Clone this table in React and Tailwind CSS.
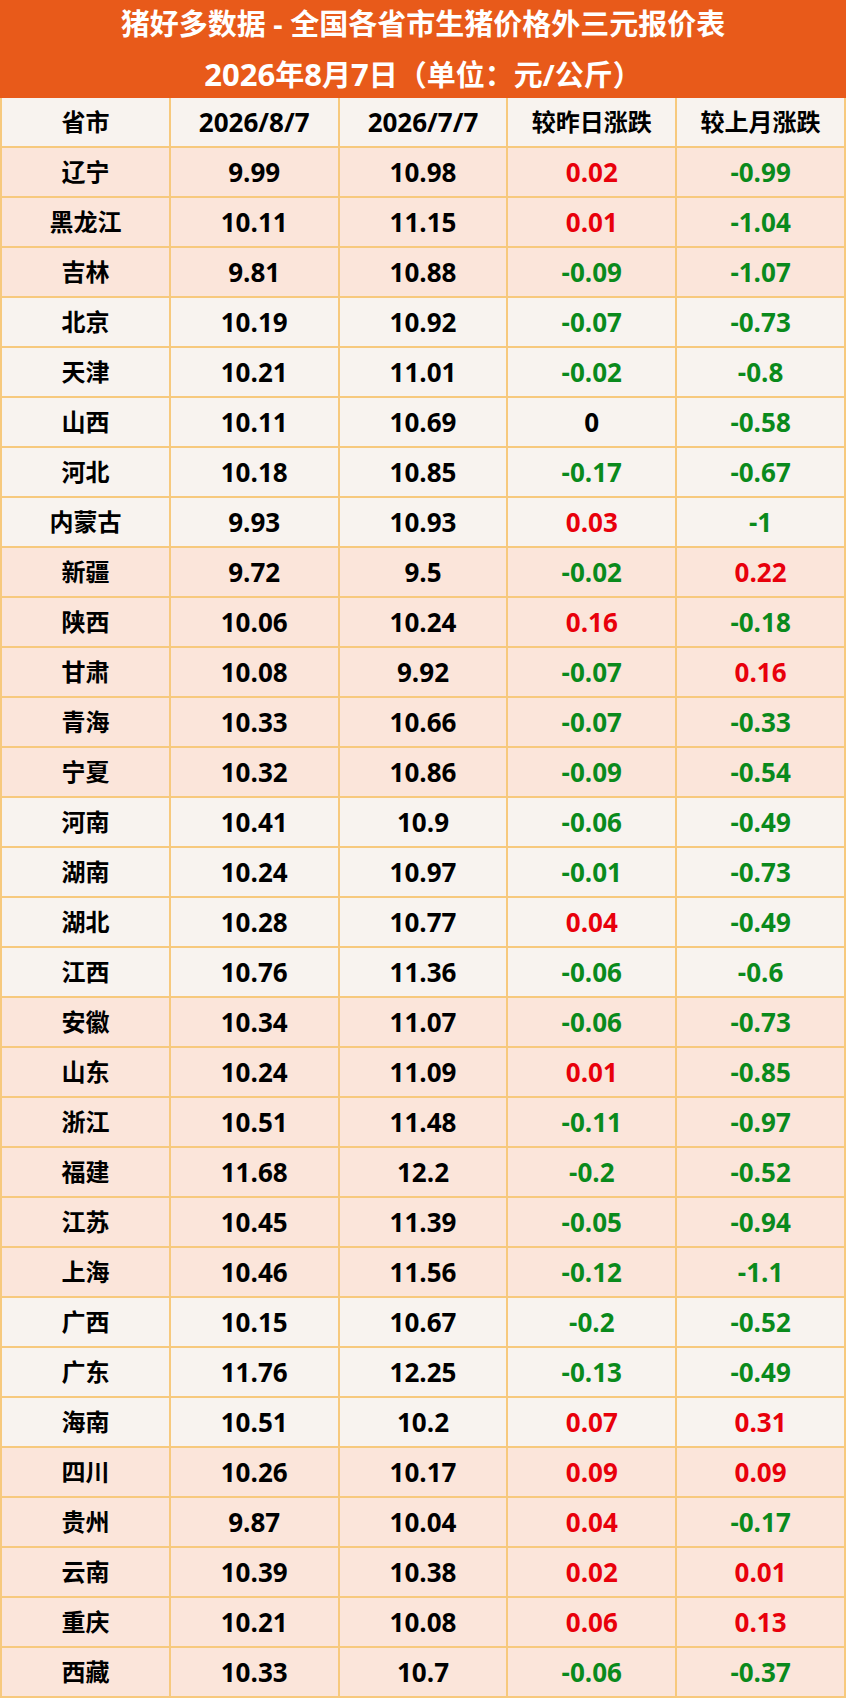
const rows = [
  ["辽宁", "9.99", "10.98", "0.02", "-0.99", 1],
  ["黑龙江", "10.11", "11.15", "0.01", "-1.04", 1],
  ["吉林", "9.81", "10.88", "-0.09", "-1.07", 1],
  ["北京", "10.19", "10.92", "-0.07", "-0.73", 0],
  ["天津", "10.21", "11.01", "-0.02", "-0.8", 0],
  ["山西", "10.11", "10.69", "0", "-0.58", 0],
  ["河北", "10.18", "10.85", "-0.17", "-0.67", 0],
  ["内蒙古", "9.93", "10.93", "0.03", "-1", 0],
  ["新疆", "9.72", "9.5", "-0.02", "0.22", 1],
  ["陕西", "10.06", "10.24", "0.16", "-0.18", 1],
  ["甘肃", "10.08", "9.92", "-0.07", "0.16", 1],
  ["青海", "10.33", "10.66", "-0.07", "-0.33", 1],
  ["宁夏", "10.32", "10.86", "-0.09", "-0.54", 1],
  ["河南", "10.41", "10.9", "-0.06", "-0.49", 0],
  ["湖南", "10.24", "10.97", "-0.01", "-0.73", 0],
  ["湖北", "10.28", "10.77", "0.04", "-0.49", 0],
  ["江西", "10.76", "11.36", "-0.06", "-0.6", 0],
  ["安徽", "10.34", "11.07", "-0.06", "-0.73", 1],
  ["山东", "10.24", "11.09", "0.01", "-0.85", 1],
  ["浙江", "10.51", "11.48", "-0.11", "-0.97", 1],
  ["福建", "11.68", "12.2", "-0.2", "-0.52", 1],
  ["江苏", "10.45", "11.39", "-0.05", "-0.94", 1],
  ["上海", "10.46", "11.56", "-0.12", "-1.1", 1],
  ["广西", "10.15", "10.67", "-0.2", "-0.52", 0],
  ["广东", "11.76", "12.25", "-0.13", "-0.49", 0],
  ["海南", "10.51", "10.2", "0.07", "0.31", 0],
  ["四川", "10.26", "10.17", "0.09", "0.09", 1],
  ["贵州", "9.87", "10.04", "0.04", "-0.17", 1],
  ["云南", "10.39", "10.38", "0.02", "0.01", 1],
  ["重庆", "10.21", "10.08", "0.06", "0.13", 1],
  ["西藏", "10.33", "10.7", "-0.06", "-0.37", 1],
];

// red for up, green for down, black for flat
const changeColor = (v) => {
  const n = parseFloat(v);
  if (n > 0) return "text-[#e8000b]";
  if (n < 0) return "text-[#0a8a1c]";
  return "text-black";
};

const Cell = ({ children, className = "" }) => (
  <div
    className={`flex items-center justify-center border-l-2 border-[#f7c97d] ${className}`}
  >
    {children}
  </div>
);

const App = () => {
  return (
    <div
      className="w-[846px] bg-white font-bold"
      style={{ fontFamily: '"Open Sans", "Noto Sans CJK SC", sans-serif' }}
    >
      {/* Title */}
      <div className="h-[98px] bg-[#e85a1a] text-white flex flex-col items-center justify-center text-[29px] leading-[50px]">
        <div>猪好多数据 - 全国各省市生猪价格外三元报价表</div>
        <div>
          <span className="text-[31px]">2026</span>年<span className="text-[31px]">8</span>月
          <span className="text-[31px]">7</span>日（单位：元/公斤）
        </div>
      </div>

      {/* Table */}
      <div className="text-[24px] text-black">
        <div className="grid grid-cols-5 h-[50px] bg-[#f8f3ef] border-b-2 border-r-2 border-[#f7c97d]">
          <Cell>省市</Cell>
          <Cell className="text-[26px]">2026/8/7</Cell>
          <Cell className="text-[26px]">2026/7/7</Cell>
          <Cell>较昨日涨跌</Cell>
          <Cell>较上月涨跌</Cell>
        </div>
        {rows.map((r) => (
          <div
            key={r[0]}
            className={`grid grid-cols-5 h-[50px] border-b-2 border-r-2 border-[#f7c97d] ${
              r[5] ? "bg-[#fbe5da]" : "bg-[#f8f3ef]"
            }`}
          >
            <Cell>{r[0]}</Cell>
            <Cell className="text-[26px]">{r[1]}</Cell>
            <Cell className="text-[26px]">{r[2]}</Cell>
            <Cell className={`text-[26px] ${changeColor(r[3])}`}>{r[3]}</Cell>
            <Cell className={`text-[26px] ${changeColor(r[4])}`}>{r[4]}</Cell>
          </div>
        ))}
      </div>
    </div>
  );
};

export default App;
